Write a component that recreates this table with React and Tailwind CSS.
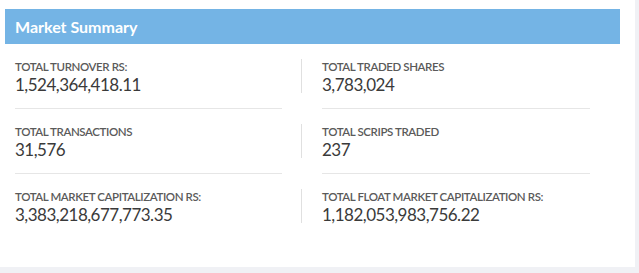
import React from "react";

const rows = [
  [
    ["TOTAL TURNOVER RS:", "1,524,364,418.11"],
    ["TOTAL TRADED SHARES", "3,783,024"],
  ],
  [
    ["TOTAL TRANSACTIONS", "31,576"],
    ["TOTAL SCRIPS TRADED", "237"],
  ],
  [
    ["TOTAL MARKET CAPITALIZATION RS:", "3,383,218,677,773.35"],
    ["TOTAL FLOAT MARKET CAPITALIZATION RS:", "1,182,053,983,756.22"],
  ],
];

function Stat({ label, value }) {
  return (
    <div className="h-[34px]">
      <div className="text-[11.5px] leading-[15px] font-semibold tracking-[-0.4px] text-[#5a5a5a] uppercase">{label}</div>
      <div className="text-[17px] leading-[21px] tracking-[-0.5px] text-[#3a3a3a]">{value}</div>
    </div>
  );
}

export default function App() {
  return (
    <div className="w-[639px] h-[273px] bg-[#f0f1f5] font-['Lato',sans-serif]">
      <div className="w-[635px] h-[267px] bg-white pt-[9px]">
        <div className="ml-[5px] w-[615px] h-[35px] bg-[#74b4e5] flex items-center pl-[10px] text-white font-bold text-[16px]">
          Market Summary
        </div>
        <div className="pl-[15px]">
          {rows.map((row, i) => {
            const last = i === rows.length - 1;
            return (
              <div key={i} className="flex">
                <div className={"w-[267px] py-[15px] " + (last ? "" : "border-b border-[#e6e6e6]")}>
                  <Stat label={row[0][0]} value={row[0][1]} />
                </div>
                <div className="w-[19px]" />
                <div className="w-[289px]">
                  <div className="py-[15px]">
                    <div className="border-l border-[#e0e0e0] pl-[20px]">
                      <Stat label={row[1][0]} value={row[1][1]} />
                    </div>
                  </div>
                  {!last && <div className="ml-[21px] border-b border-[#e6e6e6]" />}
                </div>
              </div>
            );
          })}
        </div>
      </div>
    </div>
  );
}
